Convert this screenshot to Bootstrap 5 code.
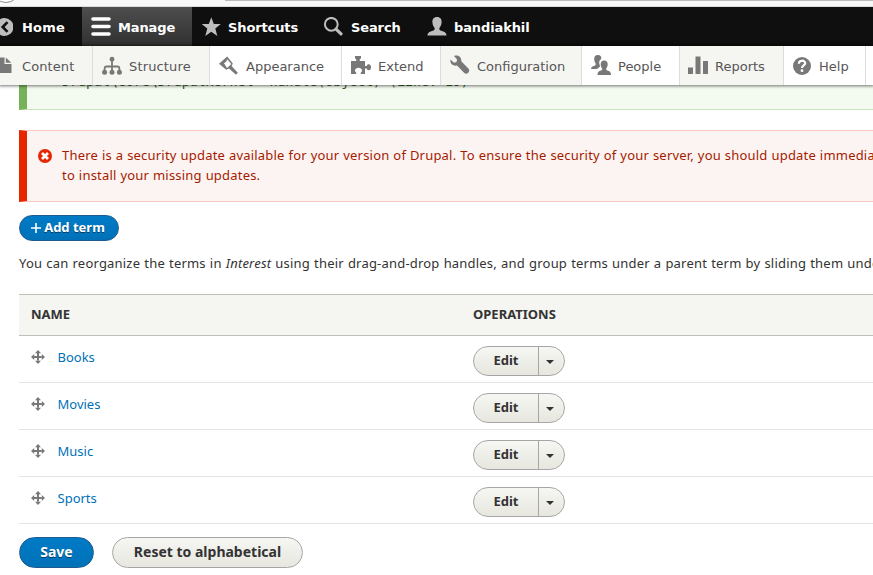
<!DOCTYPE html>
<html lang="en">
<head>
<meta charset="utf-8">
<meta name="viewport" content="width=device-width, initial-scale=1">
<title>Interest | Drupal</title>
<link href="https://cdn.jsdelivr.net/npm/bootstrap@5.3.0/dist/css/bootstrap.min.css" rel="stylesheet">
<style>
body{font-family:"Noto Sans","Open Sans",sans-serif;font-size:13px;line-height:20px;color:#333;background:#fff;height:575px;overflow:hidden;white-space:nowrap}
.chrome-strip{height:7px;background:#f7f7f8;border-bottom:1px solid #d9dadb;overflow:hidden}
.reload-ring{width:28px;height:28px;margin:-26px 0 0 -8px;border:1px solid #8d8d8d;border-radius:50%;background:#fff}
.url-edge{height:1px;margin-left:225px;background:#b9babb}
.admin-bar{height:39px;background:#0f0f0f;font:bold 13px/39px "DejaVu Sans",Verdana,sans-serif;letter-spacing:-.12px}
.admin-bar a{color:#fff;text-decoration:none;height:39px;padding-left:10px;gap:7px}
.admin-bar a.is-active{background:linear-gradient(#4e4e4e,#303030)}
.admin-tray{height:39px;background:#fff;font:13px/39px "DejaVu Sans",Verdana,sans-serif;box-shadow:0 0 3px 1px rgba(0,0,0,.55);z-index:2}
.admin-tray a{color:#565656;text-decoration:none;height:39px;border-right:1px solid #ddd;padding-left:9px;gap:7px}
.admin-tray a.shade{background:#f5f5f2}
.admin-bar svg,.admin-tray svg{width:20px;height:20px;flex:none;display:block}
.admin-bar span,.admin-tray span{padding-top:2px}
.admin-tray svg.people,.admin-tray svg.wrench{margin-top:-1px}
.admin-bar .w-home{width:82px;padding-left:0;gap:9px;letter-spacing:.2px}
.admin-bar .w-manage{width:110px;padding-left:9px}
.admin-bar .w-short{width:121px;gap:6px}
.admin-bar .w-search{width:104px;gap:8px}
.admin-tray .t1{width:93px;padding-left:0;gap:9px;letter-spacing:.1px}
.t2{width:117px;letter-spacing:.15px}.t3{width:132px}.t4{width:99px}.t5{width:141px}.t6{width:98px}
.admin-tray .t7{width:104px;padding-left:8px}
.admin-tray .t8{width:82px;gap:6px}
.tuck{margin-left:-7px}
.page{padding-left:19px}
.status-msg{height:25px;border-left:8px solid #77b259;border-bottom:1px solid #c9e1bd;background:#f3faef;color:#325e1c;overflow:hidden}
.status-msg code{font:13.25px/20px "DejaVu Sans Mono",monospace;color:inherit;margin:-13px 0 0 35px}
.error-msg{height:72px;margin-top:20px;border:1px solid #f9c9bf;border-width:1px 0 1px 8px;border-left-color:#e62600;background:#fcf4f2;color:#a51b00;padding:14px 0 0 11px;letter-spacing:.2px;word-spacing:.3px}
.error-msg svg{width:14px;height:14px;flex:none;margin:4px 10px 0 0}
.pill{border-radius:20px;font-weight:700;border:1px solid #a6a6a6;background:linear-gradient(#f6f6f3,#e7e7df);color:#333;padding:0}
.pill-blue{border-color:#1e5c90;background:linear-gradient(#007bc6,#0071b8);color:#fff;text-shadow:0 1px rgba(0,0,0,.5)}
.b-add{width:100px;height:26px;margin-top:13px;font-size:13px}
.b-add svg{margin:0 3px 0 -2px}
.b-save{width:75px;height:31px;font-size:14px;padding-bottom:2px}
.b-reset{width:191px;height:31px;font-size:14px;padding-bottom:2px}
.intro{margin:12px 0 0;letter-spacing:.2px;word-spacing:.5px}
.terms{margin-top:21px}
.terms .hrow{height:42px;background:#f5f5f2;border:1px solid #bfbfba;border-width:1px 0;font-weight:700;padding-bottom:2px}
.terms .trow{height:47px;border-bottom:1px solid #e6e4df}
.c-name{width:454px;padding-left:12px}
.trow .c-name{padding-top:11px}
.trow svg.grip{width:14px;height:14px;margin:3px 12.5px 0 0}
.trow a{color:#0071b8;text-decoration:none}
.ops{width:92px;height:30px;margin-top:10px;overflow:hidden}
.ops .main{width:65px;border-right:1px solid #a6a6a6;padding-bottom:2px}
.drop-side{width:22px}
.caret{width:0;height:0;border:4px solid transparent;border-top-color:#333;border-bottom:0;margin-top:2px}
.actions{margin-top:13px;gap:18px}
</style>
<script src="https://cdn.jsdelivr.net/npm/bootstrap@5.3.0/dist/js/bootstrap.bundle.min.js"></script>
</head>
<body>
<div class="chrome-strip"><div class="url-edge"></div><div class="reload-ring"></div></div>
<nav class="admin-bar d-flex">
  <a href="#" class="d-flex align-items-center w-home"><svg class="tuck" viewBox="0 0 20 20"><circle cx="11.5" cy="10" r="9" fill="#bebebe"/><path d="M14.500 5.200 9.700 10l4.800 4.800" fill="none" stroke="#0f0f0f" stroke-width="2.600"/></svg><span>Home</span></a>
  <a href="#" class="d-flex align-items-center w-manage is-active"><svg viewBox="0 0 20 20"><path d="M2 2h16M2 9.500h16M2 17h16" stroke="#fff" stroke-width="3.600" stroke-linecap="round"/></svg><span>Manage</span></a>
  <a href="#" class="d-flex align-items-center w-short"><svg viewBox="0 0 20 20"><path d="M9.300.3l2.500 6.700 7 .1-5.500 4.500 2 7.400-6-4.200-6 4.200 2-7.400L-.2 7.100l7-.1z" fill="#bebebe"/></svg><span>Shortcuts</span></a>
  <a href="#" class="d-flex align-items-center w-search"><svg viewBox="0 0 20 20"><circle cx="8.300" cy="7.300" r="6.400" fill="none" stroke="#bebebe" stroke-width="2"/><path d="M13.300 12.300l4.700 4.500" stroke="#bebebe" stroke-width="3.200" stroke-linecap="round"/></svg><span>Search</span></a>
  <a href="#" class="d-flex align-items-center"><svg viewBox="0 0 20 20"><path d="M10 0c3.400 0 4.800 2.300 4.600 5.300-.1 2.700-1.400 4.600-2.200 5.700-.3 1.600.2 2.200 1.600 2.700 3 1 5.500 1.600 5.500 4.800H.5c0-3.200 2.500-3.800 5.500-4.800 1.400-.5 1.900-1.100 1.600-2.700C6.800 9.900 5.500 8 5.400 5.300 5.200 2.300 6.600 0 10 0z" fill="#bebebe"/></svg><span>bandiakhil</span></a>
</nav>
<nav class="admin-tray d-flex position-relative">
  <a href="#" class="d-flex align-items-center shade t1"><svg class="tuck" viewBox="0 0 20 20" fill="#787878"><path d="M1 1.500h10.500v6.500h7V17H1zM12.800 1.500l5.500 5.200h-5.500z"/></svg><span>Content</span></a>
  <a href="#" class="d-flex align-items-center shade t2"><svg viewBox="0 0 20 20" fill="#787878"><circle cx="10" cy="3.200" r="2.400"/><circle cx="2.600" cy="16.200" r="2.500"/><circle cx="10" cy="16.200" r="2.500"/><circle cx="17.400" cy="16.200" r="2.500"/><path d="M10 3v13M2.600 16v-3.500q0-2 2-2h10.800q2 0 2 2V16" fill="none" stroke="#787878" stroke-width="1.800"/></svg><span>Structure</span></a>
  <a href="#" class="d-flex align-items-center t3"><svg viewBox="0 0 20 20" fill="#787878"><path fill-rule="evenodd" d="M0 7.800 8.200.4l5.600 7-1.200 2.600 6.200 6.800-1.800 2-7-6.300-2.800 1.200zM5 7.200l3 4.800 4.300-4L8.200 3.200 7.400 5.600z"/></svg><span>Appearance</span></a>
  <a href="#" class="d-flex align-items-center t4"><svg viewBox="0 0 20 20" fill="#787878"><path d="M0 5h5.300V3.500L4 2.300V0h6v2.300L8.700 3.500V5H14v5h1.700c.2-1.200 1-1.800 2-1.800 1.500 0 2.300 1.300 2.300 3s-.8 3-2.300 3c-1 0-1.800-.6-2-1.700H14V18h-4.200v-1.500c.8-.5 1.200-1.100 1.200-2 0-1.700-1.700-2.700-3.500-2.700S4 12.800 4 14.500c0 .9.400 1.500 1.200 2V18H0z"/></svg><span>Extend</span></a>
  <a href="#" class="d-flex align-items-center shade t5"><svg class="wrench" viewBox="0 0 20 20" fill="#787878"><path d="M.4 4.500 4 7.700l2.500-.6.600-2.700L4 1C7.500-.3 11.600 1.300 11.300 6.300l7.300 7.500c2 2.400-1.600 6.600-4.300 4.300L7 10.600C3 11.500-.3 8.500.4 4.500z"/></svg><span>Configuration</span></a>
  <a href="#" class="d-flex align-items-center t6"><svg class="people" viewBox="0 0 20 20" fill="#787878"><path d="M6.800 0c2.600 0 3.700 1.500 3.500 4-1.600.8-2.400 2.500-2 4.800.1.900.5 1.500.9 2-.2 1-1 1.800-2.300 2.400l-1 .9H0c0-2.500 1.600-2.700 3.500-3.400 1-.4 1.400-.8 1.200-1.900C4 7.500 3.200 6 3.200 4 3.200 1.500 4.300 0 6.800 0z"/><path d="M13.200 5.500c2.600 0 3.600 1.700 3.500 4-.1 2-.9 3.300-1.500 4.100-.2 1.100.2 1.600 1.200 2 1.900.7 3.600 1 3.600 4.400H6.500c0-3.400 1.600-3.700 3.500-4.400 1-.4 1.400-.9 1.200-2-.6-.8-1.400-2.100-1.500-4.100-.1-2.300 1-4 3.500-4z"/></svg><span>People</span></a>
  <a href="#" class="d-flex align-items-center shade t7"><svg viewBox="0 0 20 20" fill="#787878"><path d="M0 11.500h5V18H0zM7.500.5h5V18h-5zM15 5h5v13h-5z"/></svg><span>Reports</span></a>
  <a href="#" class="d-flex align-items-center t8"><svg viewBox="0 0 20 20"><circle cx="9" cy="10" r="9" fill="#787878"/><path d="M5.900 7.700c0-4 6.300-3.800 6.300-.4 0 2.200-3.200 2.200-3.200 4.700" fill="none" stroke="#fff" stroke-width="2.200"/><circle cx="9" cy="14.700" r="1.400" fill="#fff"/></svg><span>Help</span></a>
</nav>
<main class="page">
  <div class="status-msg d-flex"><code>Drupal\Core\DrupalKernel-&gt;handle(Object) (Line: 19)</code></div>
  <div class="error-msg d-flex">
    <svg viewBox="0 0 14 14"><circle cx="7" cy="7" r="7" fill="#e62600"/><path d="M4 4l6 6M10 4l-6 6" stroke="#fff" stroke-width="2.800"/></svg>
    <div>There is a security update available for your version of Drupal. To ensure the security of your server, you should update immediately!<br>to install your missing updates.</div>
  </div>
  <button class="btn pill pill-blue b-add d-flex align-items-center justify-content-center"><svg width="10" height="10" viewBox="0 0 10 10"><path d="M5 0v10M0 5h10" stroke="#fff" stroke-width="1.600"/></svg><span>Add term</span></button>
  <p class="intro">You can reorganize the terms in <em>Interest</em> using their drag-and-drop handles, and group terms under a parent term by sliding them under</p>
  <div class="terms">
    <div class="hrow d-flex align-items-center"><div class="c-name">NAME</div><div>OPERATIONS</div></div>
    <div class="trow d-flex"><div class="c-name d-flex"><svg class="grip" viewBox="0 0 14 14"><use href="#grip"/></svg><a href="#">Books</a></div><div class="pill ops d-flex"><span class="main d-flex align-items-center justify-content-center">Edit</span><span class="drop-side d-flex align-items-center justify-content-center"><i class="caret"></i></span></div></div>
    <div class="trow d-flex"><div class="c-name d-flex"><svg class="grip" viewBox="0 0 14 14"><use href="#grip"/></svg><a href="#">Movies</a></div><div class="pill ops d-flex"><span class="main d-flex align-items-center justify-content-center">Edit</span><span class="drop-side d-flex align-items-center justify-content-center"><i class="caret"></i></span></div></div>
    <div class="trow d-flex"><div class="c-name d-flex"><svg class="grip" viewBox="0 0 14 14"><use href="#grip"/></svg><a href="#">Music</a></div><div class="pill ops d-flex"><span class="main d-flex align-items-center justify-content-center">Edit</span><span class="drop-side d-flex align-items-center justify-content-center"><i class="caret"></i></span></div></div>
    <div class="trow d-flex"><div class="c-name d-flex"><svg class="grip" viewBox="0 0 14 14"><use href="#grip"/></svg><a href="#">Sports</a></div><div class="pill ops d-flex"><span class="main d-flex align-items-center justify-content-center">Edit</span><span class="drop-side d-flex align-items-center justify-content-center"><i class="caret"></i></span></div></div>
  </div>
  <div class="actions d-flex"><button class="btn pill pill-blue b-save">Save</button><button class="btn pill b-reset">Reset to alphabetical</button></div>
</main>
<svg width="0" height="0" class="d-block"><defs><g id="grip" fill="#787878"><path d="M6 3h2v8H6zM3 6h8v2H3zM7 0l3 3.200H4zM7 14l3-3.200H4zM0 7l3.200-3v6zM14 7l-3.200-3v6z"/></g></defs></svg>
</body>
</html>
